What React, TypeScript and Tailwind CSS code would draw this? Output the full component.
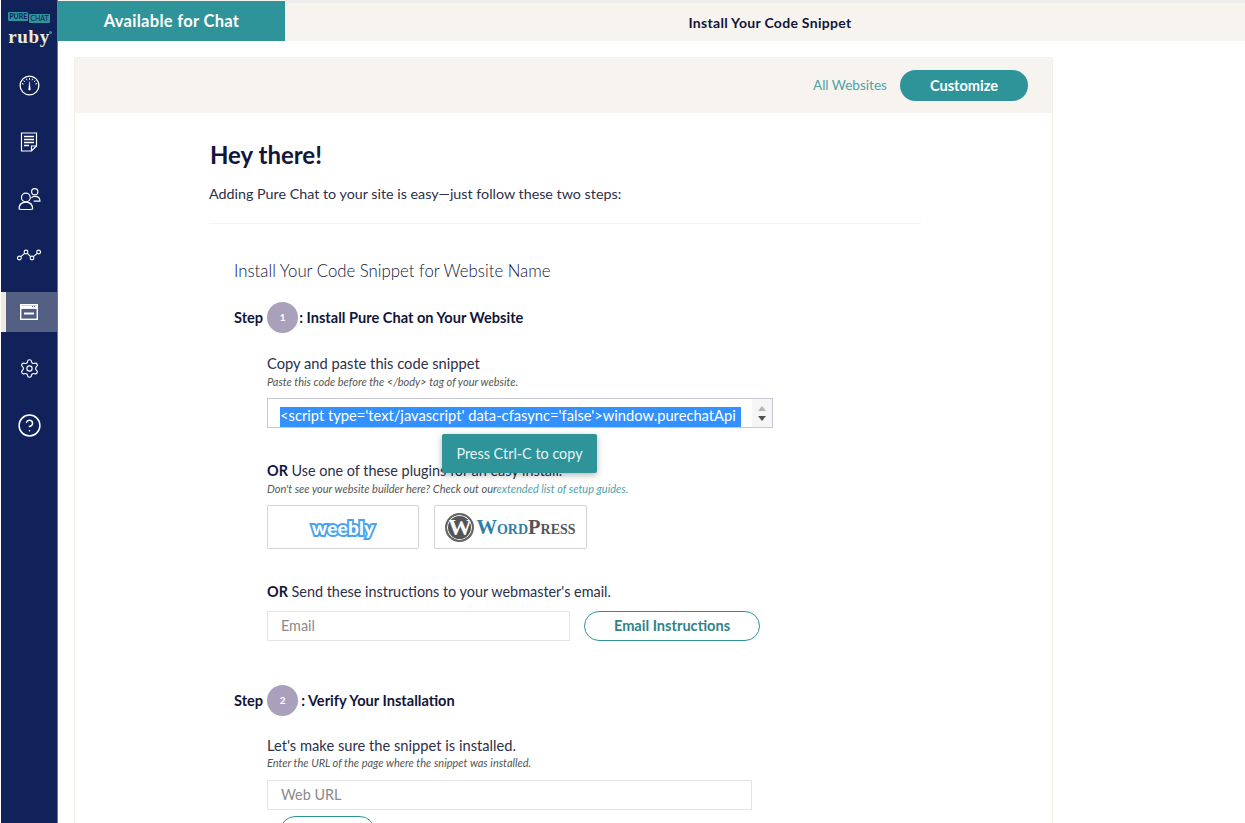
import { Settings, CircleHelp } from "lucide-react";

const teal = "bg-[#2f9499]";

function GaugeIcon() {
  return (
    <svg width="21" height="21" viewBox="0 0 21 21" fill="none" stroke="white">
      <circle cx="10.5" cy="10.5" r="9.4" strokeWidth="1.3" />
      <path d="M10.5 3v1.8M7.3 3.7l.7 1.6M13.7 3.7l-.7 1.6M4.6 5.6l1.3 1.2M16.4 5.6l-1.3 1.2M3 8.6l1.7.5M18 8.6l-1.7.5" strokeWidth="1" />
      <path d="M10.5 6.5l-.9 8.5h1.8z" fill="white" strokeWidth="0.4" />
    </svg>
  );
}

function DocIcon() {
  return (
    <svg width="18" height="20" viewBox="0 0 18 20" fill="none" stroke="white" strokeWidth="1.2">
      <path d="M1.5 1h15v13l-5 5h-10z" />
      <path d="M11.5 19v-5h5" />
      <path d="M4 4.5h10M4 7.5h10M4 10.5h10M4 13.5h5" strokeWidth="1.4" />
    </svg>
  );
}

function UsersIcon() {
  return (
    <svg width="23" height="23" viewBox="0 0 22 22" fill="none" stroke="white" strokeWidth="1.1">
      <circle cx="7.5" cy="10" r="4.2" />
      <path d="M1 21c0-4 2.5-6.5 6.5-6.5S14 17 14 21c-2 .8-11 .8-13 0z" />
      <circle cx="16" cy="4.5" r="3" />
      <path d="M12.8 10.5c.8-1 1.8-1.5 3.2-1.5 3 0 5 1.6 5 4.5h-6" />
    </svg>
  );
}

function PathIcon() {
  return (
    <svg width="24" height="12" viewBox="0 0 24 12" fill="none" stroke="white" strokeWidth="1.1">
      <circle cx="2.4" cy="9" r="1.9" />
      <circle cx="9" cy="3" r="1.9" />
      <circle cx="15" cy="9" r="1.9" />
      <circle cx="21.6" cy="3" r="1.9" />
      <path d="M3.8 7.7l3.8-3.4M10.4 4.4l3.2 3.2M16.4 7.7l3.8-3.4" />
    </svg>
  );
}

function WindowIcon() {
  return (
    <svg width="18" height="16" viewBox="0 0 18 16" fill="none" stroke="white">
      <rect x="0.7" y="0.7" width="16.6" height="14.6" strokeWidth="1.4" />
      <path d="M1 3.2h16" strokeWidth="3.4" />
      <path d="M4 9.5h10" strokeWidth="2" />
      <path d="M12 2.6h1M14 2.6h1" stroke="#525f83" strokeWidth="1" />
    </svg>
  );
}

function NavItem({ children, active }: { children: React.ReactNode; active?: boolean }) {
  return (
    <div className={`flex h-10 items-center justify-center ${active ? "bg-[#525f83] border-l-[5px] border-[#efe9dd] pr-[5px]" : ""}`}>
      {children}
    </div>
  );
}

function Sidebar() {
  return (
    <aside className="flex h-full w-[58px] shrink-0 flex-col border-l border-l-white border-r border-r-[#6d7898] bg-[#11215a]">
      <div className="flex h-[65.5px] flex-col items-center pt-[12px]">
        <div className="flex items-start gap-px">
          <span className="flex h-[9px] items-center rounded-[1px] bg-[#2f9499] px-px text-[7px] font-bold leading-none text-[#11215a]">PURE</span>
          <span className="mt-[2px] flex h-[9px] items-center rounded-[1px] bg-[#2f9499] px-px text-[7px] leading-none text-[#11215a]">CHAT</span>
        </div>
        <span className="relative mt-[6px] font-['Liberation_Serif',serif] text-[19px] font-bold leading-[15px] tracking-[0.6px] text-[#efe9dd]">
          ruby
          <span className="absolute right-[-2px] top-[2px] h-[3px] w-[3px] rounded-full bg-[#2f9499]" />
        </span>
      </div>
      <div className="flex flex-col gap-[16.6px]">
        <NavItem><GaugeIcon /></NavItem>
        <NavItem><DocIcon /></NavItem>
        <NavItem><UsersIcon /></NavItem>
        <NavItem><PathIcon /></NavItem>
        <NavItem active><WindowIcon /></NavItem>
        <NavItem><Settings size={21} color="white" strokeWidth={1.3} /></NavItem>
        <NavItem><CircleHelp size={25} color="white" strokeWidth={1.4} /></NavItem>
      </div>
    </aside>
  );
}

function StepHeading({ num, title, gap }: { num: string; title: string; gap: string }) {
  return (
    <div className="flex items-center text-[14.6px] font-bold text-[#11163a]">
      <span>Step</span>
      <span className="ml-[4px] flex h-[31px] w-[31px] items-center justify-center rounded-full bg-[#a9a1bb] text-[10px] text-white">
        {num}
      </span>
      <span className={gap}>{title}</span>
    </div>
  );
}

export default function App() {
  return (
    <div className="flex h-[823px] overflow-hidden bg-white font-['Lato',sans-serif] text-[#2c2f4a]">
      <Sidebar />
      <div className="min-w-0 flex-1">
        <header className="flex h-[41px] bg-[#f7f4ef]">
          <div className={`mt-px flex w-[227px] items-center justify-center ${teal} text-[16.5px] font-bold tracking-[0.3px] text-white`}>
            Available for Chat
          </div>
          <div className="flex flex-1 items-center justify-center border-t-[3px] border-[#ececec] pl-[10px] text-[14px] font-bold tracking-[0.3px] text-[#11163a]">
            Install Your Code Snippet
          </div>
        </header>

        <main className="ml-[16px] mt-[16px] w-[979px] border border-b-0 border-[#f4efe8]">
          <div className="flex h-[55px] items-center justify-end gap-[13px] bg-[#f7f4ef] pr-[24px]">
            <span className="text-[13.6px] text-[#4fa3a6]">All Websites</span>
            <button className={`h-[31px] w-[128px] rounded-full ${teal} text-[14.6px] font-bold text-white`}>Customize</button>
          </div>

          <div className="pl-[134px]">
            <h1 className="ml-px pt-[27px] text-[24px] font-bold leading-[30px] text-[#11163a]">Hey there!</h1>
            <p className="mt-[14px] text-[14.3px] leading-[20px]">Adding Pure Chat to your site is easy—just follow these two steps:</p>
            <hr className="mt-[19px] w-[712px] border-[#f5f3ef]" />

            <div className="pl-[25px]">
              <h2 className="mt-[36px] text-[16.8px] font-light leading-[22px] text-[#11163a]">Install Your Code Snippet for Website Name</h2>

              <div className="mt-[20px]">
                <StepHeading num="1" title=": Install Pure Chat on Your Website" gap="ml-px" />
              </div>

              <div className="pl-[33px]">
                <p className="mt-[21px] text-[14.7px] leading-[18px]">Copy and paste this code snippet</p>
                <p className="mt-[2px] text-[11px] italic leading-[15px] text-[#555]">Paste this code before the &lt;/body&gt; tag of your website.</p>

                <div className="relative mt-[9px] w-[506px]">
                  <div className="flex h-[30px] items-end border border-[#c4c7d6] bg-white pl-[12px]">
                    <span className="h-[20px] w-[461px] whitespace-nowrap bg-[#3390ff] text-[14.7px] leading-[17px] text-white">
                      &lt;script type='text/javascript' data-cfasync='false'&gt;window.purechatApi
                    </span>
                    <div className="ml-auto flex h-full w-[20px] flex-col items-center justify-center gap-[5px] bg-[#f5f5f5]">
                      <span className="h-0 w-0 border-x-[4px] border-b-[5px] border-x-transparent border-b-[#b5b5b5]" />
                      <span className="h-0 w-0 border-x-[4px] border-t-[5px] border-x-transparent border-t-[#505050]" />
                    </div>
                  </div>
                  <div className={`absolute left-[175px] top-[36px] z-10 flex h-[39px] w-[155px] items-center justify-center rounded-[2px] ${teal} text-[14.4px] text-[#e4f3f3] shadow-[0_2px_6px_rgba(0,0,0,0.3)]`}>
                    Press Ctrl-C to copy
                  </div>
                </div>

                <p className="mt-[34px] text-[14.4px] leading-[18px]"><b className="text-[#11163a]">OR</b> Use one of these plugins for an easy install.</p>
                <p className="mt-px text-[11px] italic leading-[15px] text-[#555]">
                  Don't see your website builder here? Check out our<span className="text-[#4fa3a6]">extended list of setup guides.</span>
                </p>

                <div className="mt-[9px] flex gap-[15px]">
                  <div className="flex h-[44px] w-[152px] items-center justify-center rounded-[2px] border border-[#d4d4d4]">
                    <span className="text-[19px] font-black leading-none tracking-[0.2px] text-white [-webkit-text-stroke:4px_#4aa3ee] [paint-order:stroke]">weebly</span>
                  </div>
                  <div className="flex h-[44px] w-[153px] items-center justify-center gap-[2px] rounded-[2px] border border-[#d4d4d4]">
                    <span className="flex h-[29px] w-[29px] items-center justify-center overflow-hidden rounded-full border-[2px] border-[#666] bg-[#555] font-['Liberation_Serif',serif] text-[24px] font-bold leading-none text-white shadow-[inset_0_0_0_1px_white]">W</span>
                    <span className="font-['Liberation_Serif',serif] text-[20.5px] font-bold leading-none [font-variant:small-caps]">
                      <span className="text-[#2f7fa5]">Word</span><span className="text-[#555]">Press</span>
                    </span>
                  </div>
                </div>

                <p className="mt-[34px] text-[14.4px] leading-[18px]"><b className="text-[#11163a]">OR</b> Send these instructions to your webmaster's email.</p>
                <div className="mt-[10px] flex gap-[14px]">
                  <div className="flex h-[30px] w-[303px] items-center border border-[#e4e4e4] pl-[13px] text-[14.4px] text-[#8a8a8a]">Email</div>
                  <button className="h-[30px] w-[176px] rounded-full border border-[#2f9499] text-[14.6px] font-bold text-[#2f8488]">Email Instructions</button>
                </div>
              </div>

              <div className="mt-[44px]">
                <StepHeading num="2" title=": Verify Your Installation" gap="ml-[3px]" />
              </div>

              <div className="pl-[33px]">
                <p className="mt-[20px] text-[14.7px] leading-[18px]">Let's make sure the snippet is installed.</p>
                <p className="mt-px text-[11px] italic leading-[15px] text-[#555]">Enter the URL of the page where the snippet was installed.</p>
                <div className="mt-[10px] flex h-[30px] w-[485px] items-center border border-[#e4e4e4] pl-[13px] text-[14.4px] text-[#8a8a8a]">Web URL</div>
                <button className="ml-[13px] mt-[6px] block h-[30px] w-[95px] rounded-full border border-[#2f9499]" />
              </div>
            </div>
          </div>
        </main>
      </div>
    </div>
  );
}
